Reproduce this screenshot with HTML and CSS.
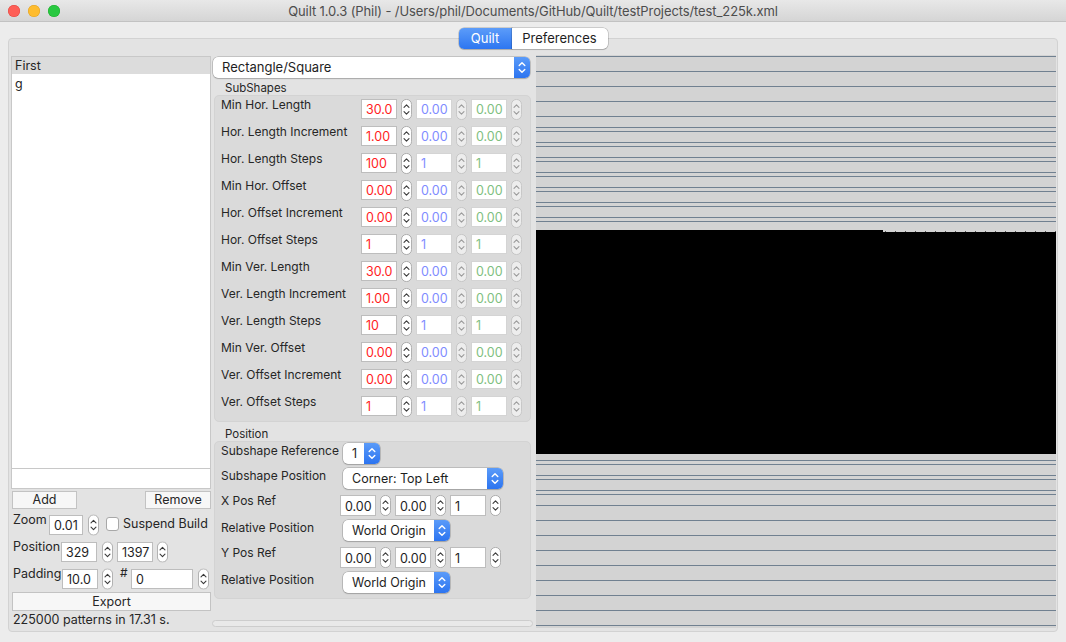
FILE: index.html
```html
<!DOCTYPE html>
<html>
<head>
<meta charset="utf-8">
<title>Quilt</title>
<link rel="stylesheet" href="styles.css">
</head>
<body>
<div class="window">
  <div class="titlebar">
    <div class="lights"><span class="light red"></span><span class="light yellow"></span><span class="light green"></span></div>
    <div class="title">Quilt 1.0.3 (Phil) - /Users/phil/Documents/GitHub/Quilt/testProjects/test_225k.xml</div>
    <div class="spacer"></div>
  </div>
  <div class="tabs"><span class="tab active">Quilt</span><span class="tab">Preferences</span></div>
  <div class="pane">
    <div class="left">
      <div class="list">
        <div class="list-head">First</div>
        <div class="list-row">g</div>
      </div>
      <div class="name-input"></div>
      <div class="btn-row"><span class="btn add">Add</span><span class="btn remove">Remove</span></div>
      <div class="lrow zoom-row">
        <span class="llabel w-zoom">Zoom</span>
        <span class="field w34">0.01</span>
        <svg class="stp m5" viewBox="0 0 12 23"><use href="#stepon"/></svg>
        <span class="check"></span>
        <span class="check-label">Suspend Build</span>
      </div>
      <div class="lrow pos-row">
        <span class="llabel w-pos">Position</span>
        <span class="field w36">329</span>
        <svg class="stp m5" viewBox="0 0 12 23"><use href="#stepon"/></svg>
        <span class="field w36 m4">1397</span>
        <svg class="stp m4" viewBox="0 0 12 23"><use href="#stepon"/></svg>
      </div>
      <div class="lrow pad-row">
        <span class="llabel w-pad">Padding</span>
        <span class="field w36">10.0</span>
        <svg class="stp m4" viewBox="0 0 12 23"><use href="#stepon"/></svg>
        <span class="hash">#</span>
        <span class="field w62">0</span>
        <svg class="stp m5" viewBox="0 0 12 23"><use href="#stepon"/></svg>
      </div>
      <div class="btn export">Export</div>
      <div class="status">225000 patterns in 17.31 s.</div>
    </div>

    <div class="middle">
      <div class="popup big"><span class="ptext">Rectangle/Square</span><span class="pbtn"><svg viewBox="0 0 16 21"><use href="#updown"/></svg></span></div>
      <div class="gtitle">SubShapes</div>
      <div class="group sub">
        <div class="row"><span class="rlabel">Min Hor. Length</span><span class="field r">30.0</span><svg class="stp m4" viewBox="0 0 12 23"><use href="#stepon"/></svg><span class="field b m4">0.00</span><svg class="stp m4" viewBox="0 0 12 23"><use href="#stepoff"/></svg><span class="field g m4">0.00</span><svg class="stp m4" viewBox="0 0 12 23"><use href="#stepoff"/></svg></div>
        <div class="row"><span class="rlabel">Hor. Length Increment</span><span class="field r">1.00</span><svg class="stp m4" viewBox="0 0 12 23"><use href="#stepon"/></svg><span class="field b m4">0.00</span><svg class="stp m4" viewBox="0 0 12 23"><use href="#stepoff"/></svg><span class="field g m4">0.00</span><svg class="stp m4" viewBox="0 0 12 23"><use href="#stepoff"/></svg></div>
        <div class="row"><span class="rlabel">Hor. Length Steps</span><span class="field r">100</span><svg class="stp m4" viewBox="0 0 12 23"><use href="#stepon"/></svg><span class="field b m4">1</span><svg class="stp m4" viewBox="0 0 12 23"><use href="#stepoff"/></svg><span class="field g m4">1</span><svg class="stp m4" viewBox="0 0 12 23"><use href="#stepoff"/></svg></div>
        <div class="row"><span class="rlabel">Min Hor. Offset</span><span class="field r">0.00</span><svg class="stp m4" viewBox="0 0 12 23"><use href="#stepon"/></svg><span class="field b m4">0.00</span><svg class="stp m4" viewBox="0 0 12 23"><use href="#stepoff"/></svg><span class="field g m4">0.00</span><svg class="stp m4" viewBox="0 0 12 23"><use href="#stepoff"/></svg></div>
        <div class="row"><span class="rlabel">Hor. Offset Increment</span><span class="field r">0.00</span><svg class="stp m4" viewBox="0 0 12 23"><use href="#stepon"/></svg><span class="field b m4">0.00</span><svg class="stp m4" viewBox="0 0 12 23"><use href="#stepoff"/></svg><span class="field g m4">0.00</span><svg class="stp m4" viewBox="0 0 12 23"><use href="#stepoff"/></svg></div>
        <div class="row"><span class="rlabel">Hor. Offset Steps</span><span class="field r">1</span><svg class="stp m4" viewBox="0 0 12 23"><use href="#stepon"/></svg><span class="field b m4">1</span><svg class="stp m4" viewBox="0 0 12 23"><use href="#stepoff"/></svg><span class="field g m4">1</span><svg class="stp m4" viewBox="0 0 12 23"><use href="#stepoff"/></svg></div>
        <div class="row"><span class="rlabel">Min Ver. Length</span><span class="field r">30.0</span><svg class="stp m4" viewBox="0 0 12 23"><use href="#stepon"/></svg><span class="field b m4">0.00</span><svg class="stp m4" viewBox="0 0 12 23"><use href="#stepoff"/></svg><span class="field g m4">0.00</span><svg class="stp m4" viewBox="0 0 12 23"><use href="#stepoff"/></svg></div>
        <div class="row"><span class="rlabel">Ver. Length Increment</span><span class="field r">1.00</span><svg class="stp m4" viewBox="0 0 12 23"><use href="#stepon"/></svg><span class="field b m4">0.00</span><svg class="stp m4" viewBox="0 0 12 23"><use href="#stepoff"/></svg><span class="field g m4">0.00</span><svg class="stp m4" viewBox="0 0 12 23"><use href="#stepoff"/></svg></div>
        <div class="row"><span class="rlabel">Ver. Length Steps</span><span class="field r">10</span><svg class="stp m4" viewBox="0 0 12 23"><use href="#stepon"/></svg><span class="field b m4">1</span><svg class="stp m4" viewBox="0 0 12 23"><use href="#stepoff"/></svg><span class="field g m4">1</span><svg class="stp m4" viewBox="0 0 12 23"><use href="#stepoff"/></svg></div>
        <div class="row"><span class="rlabel">Min Ver. Offset</span><span class="field r">0.00</span><svg class="stp m4" viewBox="0 0 12 23"><use href="#stepon"/></svg><span class="field b m4">0.00</span><svg class="stp m4" viewBox="0 0 12 23"><use href="#stepoff"/></svg><span class="field g m4">0.00</span><svg class="stp m4" viewBox="0 0 12 23"><use href="#stepoff"/></svg></div>
        <div class="row"><span class="rlabel">Ver. Offset Increment</span><span class="field r">0.00</span><svg class="stp m4" viewBox="0 0 12 23"><use href="#stepon"/></svg><span class="field b m4">0.00</span><svg class="stp m4" viewBox="0 0 12 23"><use href="#stepoff"/></svg><span class="field g m4">0.00</span><svg class="stp m4" viewBox="0 0 12 23"><use href="#stepoff"/></svg></div>
        <div class="row"><span class="rlabel">Ver. Offset Steps</span><span class="field r">1</span><svg class="stp m4" viewBox="0 0 12 23"><use href="#stepon"/></svg><span class="field b m4">1</span><svg class="stp m4" viewBox="0 0 12 23"><use href="#stepoff"/></svg><span class="field g m4">1</span><svg class="stp m4" viewBox="0 0 12 23"><use href="#stepoff"/></svg></div>
      </div>
      <div class="gtitle pos-title">Position</div>
      <div class="group posg">
        <div class="prow"><span class="plabel">Subshape Reference</span><div class="popup p-ref"><span class="ptext">1</span><span class="pbtn"><svg viewBox="0 0 16 21"><use href="#updown"/></svg></span></div></div>
        <div class="prow"><span class="plabel">Subshape Position</span><div class="popup p-pos"><span class="ptext">Corner: Top Left</span><span class="pbtn"><svg viewBox="0 0 16 21"><use href="#updown"/></svg></span></div></div>
        <div class="prow inrow"><span class="plabel">X Pos Ref</span><span class="field k shift">0.00</span><svg class="stp m4" viewBox="0 0 12 23"><use href="#stepon"/></svg><span class="field k m4">0.00</span><svg class="stp m4" viewBox="0 0 12 23"><use href="#stepon"/></svg><span class="field k m4">1</span><svg class="stp m4" viewBox="0 0 12 23"><use href="#stepon"/></svg></div>
        <div class="prow"><span class="plabel">Relative Position</span><div class="popup p-rel"><span class="ptext">World Origin</span><span class="pbtn"><svg viewBox="0 0 16 21"><use href="#updown"/></svg></span></div></div>
        <div class="prow inrow"><span class="plabel">Y Pos Ref</span><span class="field k shift">0.00</span><svg class="stp m4" viewBox="0 0 12 23"><use href="#stepon"/></svg><span class="field k m4">0.00</span><svg class="stp m4" viewBox="0 0 12 23"><use href="#stepon"/></svg><span class="field k m4">1</span><svg class="stp m4" viewBox="0 0 12 23"><use href="#stepon"/></svg></div>
        <div class="prow"><span class="plabel">Relative Position</span><div class="popup p-rel"><span class="ptext">World Origin</span><span class="pbtn"><svg viewBox="0 0 16 21"><use href="#updown"/></svg></span></div></div>
      </div>
      <div class="hscroll"></div>
    </div>

    <div class="canvas">
      <svg width="520" height="573" viewBox="0 0 520 573">
        <rect width="520" height="573" fill="#d3d3d3"/>
        <g fill="#708090">
          <rect y="1" width="520" height="1"/><rect y="16" width="520" height="1"/><rect y="31" width="520" height="1"/><rect y="46" width="520" height="1"/>
          <rect y="61" width="520" height="1"/><rect y="76" width="520" height="1"/><rect y="91" width="520" height="1"/><rect y="106" width="520" height="1"/>
          <rect y="121" width="520" height="1"/><rect y="136" width="520" height="1"/><rect y="151" width="520" height="1"/><rect y="166" width="520" height="1"/>
          <rect y="72" width="520" height="1"/><rect y="87" width="520" height="1"/><rect y="102" width="520" height="1"/><rect y="117" width="520" height="1"/>
          <rect y="132" width="520" height="1"/><rect y="147" width="520" height="1"/><rect y="162" width="520" height="1"/>
          <rect y="405" width="520" height="1"/><rect y="420" width="520" height="1"/><rect y="435" width="520" height="1"/><rect y="450" width="520" height="1"/>
          <rect y="465" width="520" height="1"/><rect y="480" width="520" height="1"/><rect y="495" width="520" height="1"/><rect y="510" width="520" height="1"/>
          <rect y="525" width="520" height="1"/><rect y="540" width="520" height="1"/><rect y="555" width="520" height="1"/><rect y="570" width="520" height="1"/>
          <rect y="409" width="520" height="1"/><rect y="424" width="520" height="1"/><rect y="439" width="520" height="1"/>
        </g>
        <rect x="0" y="175" width="347" height="224" fill="#000"/>
        <rect x="347" y="177" width="173" height="222" fill="#000"/>
        <line x1="349" y1="176.5" x2="520" y2="176.5" stroke="#555" stroke-dasharray="1 9"/>
      </svg>
    </div>
  </div>
</div>

<svg class="defs" width="0" height="0">
  <symbol id="stepon" viewBox="0 0 12 23">
    <rect x="0.5" y="0.5" width="11" height="22" rx="5.5" fill="#ffffff" stroke="#a9a9a9"/>
    <path d="M3.3 9.2 L6 6.5 L8.7 9.2" fill="none" stroke="#3a3a3a" stroke-width="1.2" stroke-linecap="round" stroke-linejoin="round"/>
    <path d="M3.3 13.8 L6 16.5 L8.7 13.8" fill="none" stroke="#3a3a3a" stroke-width="1.2" stroke-linecap="round" stroke-linejoin="round"/>
  </symbol>
  <symbol id="stepoff" viewBox="0 0 12 23">
    <rect x="0.5" y="0.5" width="11" height="22" rx="5.5" fill="#ededed" stroke="#c4c4c4"/>
    <path d="M3.3 9.2 L6 6.5 L8.7 9.2" fill="none" stroke="#9a9a9a" stroke-width="1.2" stroke-linecap="round" stroke-linejoin="round"/>
    <path d="M3.3 13.8 L6 16.5 L8.7 13.8" fill="none" stroke="#9a9a9a" stroke-width="1.2" stroke-linecap="round" stroke-linejoin="round"/>
  </symbol>
  <symbol id="updown" viewBox="0 0 16 21">
    <path d="M5.2 8.6 L8 5.8 L10.8 8.6" fill="none" stroke="#ffffff" stroke-width="1.4" stroke-linecap="round" stroke-linejoin="round"/>
    <path d="M5.2 12.4 L8 15.2 L10.8 12.4" fill="none" stroke="#ffffff" stroke-width="1.4" stroke-linecap="round" stroke-linejoin="round"/>
  </symbol>
</svg>
</body>
</html>
```

FILE: styles.css
```css
* { box-sizing: border-box; margin: 0; padding: 0; }
html, body { width: 1066px; height: 642px; overflow: hidden; }
body {
  background: #ececec;
  font-family: Inter, "Noto Sans", "Liberation Sans", sans-serif;
  font-size: 12px;
  color: #262626;
}
.defs { display: block; width: 0; height: 0; overflow: hidden; }

.window { width: 1066px; height: 642px; display: flex; flex-direction: column; }

/* title bar */
.titlebar {
  height: 22px; flex: none;
  display: flex; align-items: center;
  background: linear-gradient(#e8e8e8, #d5d5d5);
  border-bottom: 1px solid #c2c2c2;
}
.lights { width: 90px; display: flex; gap: 8px; padding-left: 8px; }
.light { width: 12px; height: 12px; border-radius: 50%; }
.red { background: #fe5f57; box-shadow: inset 0 0 0 0.5px #e14640; }
.yellow { background: #febc2e; box-shadow: inset 0 0 0 0.5px #dfa023; }
.green { background: #28c840; box-shadow: inset 0 0 0 0.5px #1dad2b; }
.title { flex: 1; text-align: center; color: #4d4d4d; font-size: 13px; letter-spacing: -0.1px; white-space: nowrap; }
.spacer { width: 90px; }

/* tabs */
.tabs { display: flex; justify-content: center; margin-top: 6px; height: 21px; position: relative; z-index: 2; }
.tab {
  height: 21px; line-height: 20px; text-align: center; font-size: 13px;
  background: #ffffff; color: #1e1e1e;
  box-shadow: 0 0 0 0.5px rgba(0,0,0,0.28), 0 1px 1px rgba(0,0,0,0.12);
}
.tab.active {
  width: 53px; color: #fff;
  background: linear-gradient(#5c9cf9, #2d76f1);
  border-radius: 5px 0 0 5px;
}
.tab:last-child { width: 96px; border-radius: 0 5px 5px 0; }

/* pane */
.pane {
  margin: -11px 8px 0 8px;
  height: 594px;
  background: #e3e3e3;
  border: 1px solid #d2d2d2;
  border-radius: 4px;
  display: flex;
  padding: 16px 0 0 2px;
}

/* left column */
.left { width: 200px; margin-top: 1px; display: flex; flex-direction: column; }
.list { height: 412px; background: #fff; border: 1px solid #c8c8c8; border-bottom: none; }
.list-head { height: 17px; line-height: 18px; background: #dcdcdc; padding-left: 3px; font-size: 12.5px; }
.list-row { height: 18px; line-height: 20px; padding-left: 3px; font-size: 12.5px; }
.name-input { height: 21px; background: #fff; border: 1px solid #c8c8c8; }
.btn-row { display: flex; justify-content: space-between; margin-top: 2px; }
.btn {
  height: 18px; line-height: 16px; text-align: center;
  background: #f7f7f7; border: 1px solid #c3c3c3; font-size: 12.5px;
}
.add { width: 65px; margin-left: 1px; }
.remove { width: 66px; }
.lrow { display: flex; align-items: flex-start; padding-left: 2px; white-space: nowrap; }
.zoom-row { margin-top: 4px; height: 27px; }
.pos-row { height: 27px; }
.pad-row { height: 25px; }
.llabel { line-height: 14px; margin-top: 0; font-size: 12.5px; flex: none; }
.w-zoom { width: 36px; }
.w-pos { width: 48px; }
.w-pad { width: 49px; }
.field {
  height: 20px; line-height: 20px; background: #fff;
  border: 1px solid #bdbdbd; padding-left: 4px;
  font-size: 12.5px; color: #1e1e1e;
  display: block; flex: none; white-space: nowrap; overflow: hidden;
}
.lrow .field { margin-top: 2px; height: 20px; line-height: 20px; }
.w34 { width: 34px; }
.w36 { width: 36px; }
.w62 { width: 62px; }
.stp { width: 11px; height: 22px; flex: none; display: block; }
.lrow .stp { margin-top: 1px; }
.m4 { margin-left: 4px; }
.m5 { margin-left: 5px; }
.check {
  width: 13px; height: 14px; margin: 4px 0 0 7px;
  background: #fff; border: 1px solid #a8a8a8; border-radius: 3px; flex: none;
}
.check-label { margin: 3px 0 0 4px; line-height: 16px; font-size: 12.5px; flex: none; }
.hash { margin: 0 0 0 7px; width: 11px; line-height: 12px; font-size: 12px; flex: none; }
.export { margin-top: 0; width: 199px; height: 19px; line-height: 17px; margin-left: 1px; font-size: 12.5px; }
.status { margin: 1px 0 0 2px; line-height: 15px; font-size: 12.5px; white-space: nowrap; }

/* middle column */
.middle { width: 322px; margin-left: 1px; display: flex; flex-direction: column; }
.popup {
  display: flex; height: 21px; background: #fff; border-radius: 5px;
  box-shadow: 0 0 0 0.5px rgba(0,0,0,0.28), 0 1px 1.5px rgba(0,0,0,0.14);
  font-size: 12.5px; color: #1e1e1e; flex: none;
}
.ptext { flex: 1; padding-left: 9px; line-height: 21px; white-space: nowrap; }
.pbtn {
  width: 16px; height: 21px; border-radius: 0 5px 5px 0;
  background: linear-gradient(#5a9bf9, #2c74f0); display: block;
}
.pbtn svg { width: 16px; height: 21px; display: block; }
.popup.big { margin: 2px 0 0 1px; width: 317px; font-size: 13px; }
.gtitle { height: 17px; line-height: 21px; padding-left: 13px; font-size: 11.5px; color: #262626; }
.group {
  margin-left: 2px; width: 317px;
  background: #dadada; border: 1px solid #d3d3d3; border-radius: 5px;
  padding-left: 6px;
}
.group.sub { height: 327px; padding-top: 3px; }
.row { height: 27px; display: flex; align-items: flex-start; }
.rlabel { width: 140px; line-height: 14px; margin-top: -1px; flex: none; white-space: nowrap; }
.row .stp { margin-top: -1px; height: 23px; }
.field.r { width: 36px; color: #ff1d1d; }
.field.b { width: 36px; color: #7f8cff; border-color: #d4d4d4; }
.field.g { width: 36px; color: #7fc07f; border-color: #d4d4d4; }
.field.k { width: 36px; height: 21px; line-height: 21px; }
.pos-title { height: 19px; line-height: 24px; margin-top: 0; }
.group.posg { height: 158px; padding-top: 1px; }
.prow { display: flex; align-items: flex-start; height: 25px; }
.prow.inrow { height: 27px; }
.prow.inrow .field { margin-top: 2px; }
.prow.inrow .stp { height: 25px; width: 11px; }
.plabel { width: 122px; line-height: 14px; margin-top: 1px; flex: none; white-space: nowrap; }
.shift { margin-left: -3px; }
.p-ref { width: 37px; }
.p-pos { width: 160px; }
.p-rel { width: 107px; }
.hscroll {
  margin-top: 21px; height: 7px; width: 321px;
  background: #e9e9e9; border: 1px solid #cdcdcd; border-radius: 4px;
}

/* canvas */
.canvas { margin-left: 2px; width: 520px; height: 573px; flex: none; }
.canvas svg { display: block; }
```
